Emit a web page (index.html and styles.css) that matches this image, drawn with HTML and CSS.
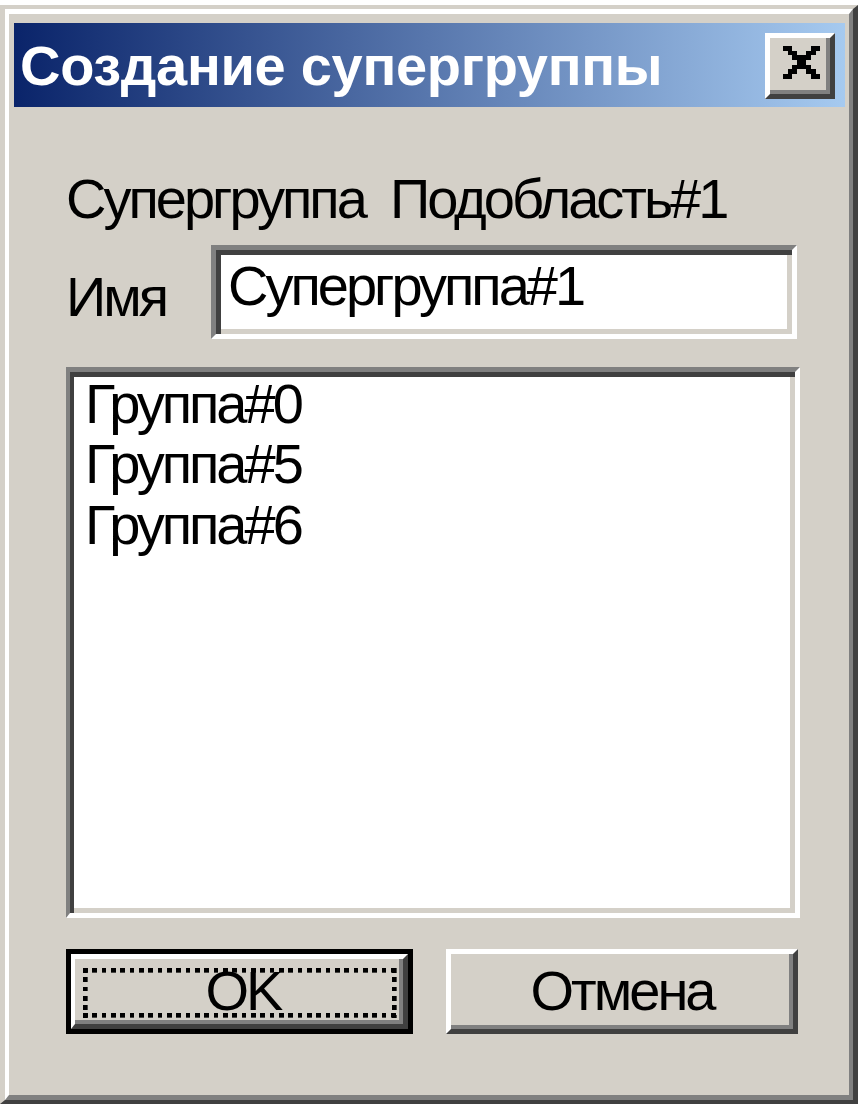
FILE: index.html
```html
<!DOCTYPE html>
<html lang="ru">
<head>
<meta charset="utf-8">
<title>Создание супергруппы</title>
<link rel="stylesheet" href="styles.css">
</head>
<body>
<div class="window">
  <div class="frame">
    <div class="titlebar">
      <span class="title">Создание супергруппы</span>
      <button class="close-btn" type="button" aria-label="Закрыть">
        <svg class="close-glyph" viewBox="0 0 8 7" width="37.33" height="32.67" shape-rendering="crispEdges" aria-hidden="true">
          <path fill="#000" d="M0 0h2v1H0zM6 0h2v1H6zM1 1h2v1H1zM5 1h2v1H5zM2 2h4v1H2zM3 3h2v1H3zM2 4h4v1H2zM1 5h2v1H1zM5 5h2v1H5zM0 6h2v1H0zM6 6h2v1H6z"/>
        </svg>
      </button>
    </div>
    <div class="content">
      <div class="caption-line">Супергруппа  Подобласть#1</div>
      <div class="name-row">
        <label class="name-label" for="group-name">Имя</label>
        <div class="edit" id="group-name">Супергруппа#1</div>
      </div>
      <ul class="listbox">
        <li>Группа#0</li>
        <li>Группа#5</li>
        <li>Группа#6</li>
      </ul>
      <div class="buttons">
        <button class="btn-default" type="button">
          <span class="btn-face">
            <span class="btn-text">OK</span>
            <span class="focus-ring"></span>
          </span>
        </button>
        <button class="btn" type="button"><span class="btn-text">Отмена</span></button>
      </div>
    </div>
  </div>
</div>
</body>
</html>
```
FILE: styles.css
```css
html, body {
  margin: 0;
  height: 100%;
}

body {
  background: #fff;
  padding-top: 5px;
  box-sizing: border-box;
  font-family: "Liberation Sans", Arial, sans-serif;
  color: #000;
}

/* outer window edge: light top/left, dark bottom/right */
.window {
  height: 1099px;
  box-sizing: border-box;
  border-style: solid;
  border-width: 4px 5px 4px 5px;
  border-color: #d4d0c8 #404040 #404040 #d4d0c8;
  background: #d4d0c8;
}

/* inner window edge */
.frame {
  height: 100%;
  box-sizing: border-box;
  border-style: solid;
  border-width: 5px 4px 5px 4px;
  border-color: #fff #808080 #808080 #fff;
  padding: 9px 4px 0 5px;
  display: flex;
  flex-direction: column;
}

.titlebar {
  height: 84px;
  flex: none;
  background: linear-gradient(to right, #0a246a, #a6caf0);
  display: flex;
  align-items: flex-start;
}

.title {
  color: #fff;
  font-weight: bold;
  font-size: 56px;
  line-height: 60px;
  margin-top: 13px;
  padding-left: 6px;
  letter-spacing: -0.3px;
  white-space: nowrap;
}

.close-btn {
  margin: 10px 10px 0 auto;
  width: 70px;
  height: 66px;
  box-sizing: border-box;
  border-style: solid;
  border-width: 5px;
  border-color: #fff #404040 #404040 #fff;
  box-shadow: inset -4px -4px 0 #808080;
  background: #d4d0c8;
  padding: 8px 0 0 13px;
  display: flex;
  align-items: flex-start;
  justify-content: flex-start;
  cursor: default;
}

.close-glyph {
  display: block;
}

.content {
  padding: 0 45px 0 52px;
  display: flex;
  flex-direction: column;
  font-size: 56px;
  line-height: 60.7px;
  letter-spacing: -3px;
}

.caption-line {
  margin-top: 62px;
  white-space: pre;
}

.name-row {
  display: flex;
  align-items: flex-start;
  margin-top: 15px;
}

.name-label {
  width: 145px;
  flex: none;
  margin-top: 22px;
}

/* sunken text field */
.edit {
  width: 586px;
  height: 94px;
  box-sizing: border-box;
  border-style: solid;
  border-width: 5px;
  border-color: #808080 #fff #fff #808080;
  box-shadow: inset 5px 5px 0 #404040, inset -5px -5px 0 #d4d0c8;
  background: #fff;
  padding: 6px 0 0 12px;
  white-space: nowrap;
}

.listbox {
  list-style: none;
  margin: 28px 0 0;
  height: 551px;
  box-sizing: border-box;
  border-style: solid;
  border-width: 5px 5px 5px 4px;
  border-color: #808080 #fff #fff #808080;
  box-shadow: inset 4px 5px 0 #404040, inset -5px -5px 0 #d4d0c8;
  background: #fff;
  padding: 2px 0 0 15px;
}

.buttons {
  display: flex;
  gap: 33px;
  margin-top: 31px;
}

.btn,
.btn-default {
  font: inherit;
  letter-spacing: inherit;
  color: #000;
  margin: 0;
  height: 85px;
  box-sizing: border-box;
  background: #d4d0c8;
  cursor: default;
}

.btn {
  width: 352px;
  padding: 0;
  border-style: solid;
  border-width: 5px;
  border-color: #fff #404040 #404040 #fff;
  box-shadow: inset -4px -4px 0 #808080;
  display: flex;
  align-items: center;
  justify-content: center;
}

/* default button: black frame around the raised face */
.btn-default {
  width: 347px;
  padding: 0;
  border: 5px solid #000;
  display: flex;
}

.btn-face {
  position: relative;
  flex: 1;
  box-sizing: border-box;
  border-style: solid;
  border-width: 5px 5px 5px 4px;
  border-color: #fff #404040 #404040 #fff;
  box-shadow: inset -4px -4px 0 #808080;
  display: flex;
  align-items: center;
  justify-content: center;
  padding-left: 8px;
}

.btn-text {
  line-height: 60.7px;
  white-space: nowrap;
}

/* dotted keyboard-focus rectangle drawn over the face */
.focus-ring {
  position: absolute;
  top: 9px;
  left: 8px;
  right: 6px;
  bottom: 6px;
  pointer-events: none;
  background:
    repeating-linear-gradient(to right, #000 0 4.67px, transparent 4.67px 9.33px) top / 100% 4.67px no-repeat,
    repeating-linear-gradient(to right, #000 0 4.67px, transparent 4.67px 9.33px) bottom / 100% 4.67px no-repeat,
    repeating-linear-gradient(to bottom, #000 0 4.67px, transparent 4.67px 9.33px) left / 4.67px 100% no-repeat,
    repeating-linear-gradient(to bottom, #000 0 4.67px, transparent 4.67px 9.33px) right / 4.67px 100% no-repeat;
}
```
